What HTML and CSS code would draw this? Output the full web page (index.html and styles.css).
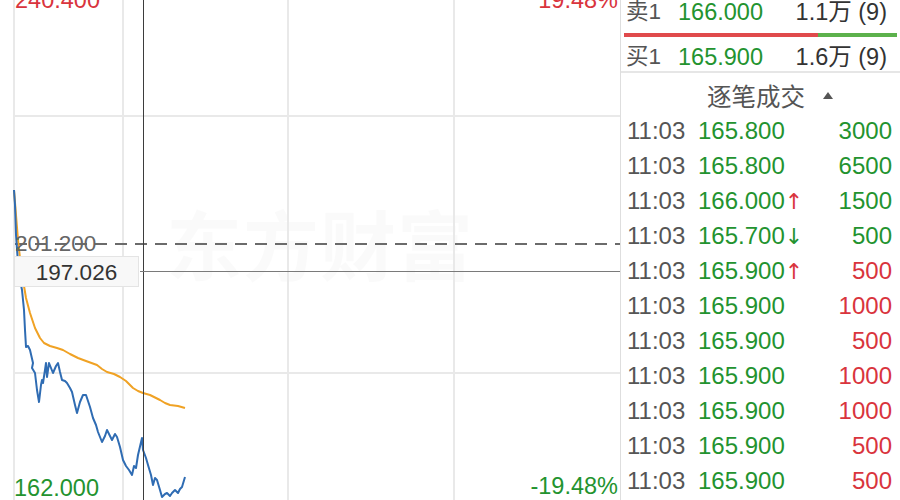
FILE: index.html
```html
<!DOCTYPE html>
<html lang="zh-CN">

<head>
    <meta charset="UTF-8">
    <meta name="viewport" content="width=device-width, initial-scale=1.0">
    <title>分时走势</title>
    <link rel="stylesheet" href="styles.css">
</head>

<body>

    <div class="screen">
        <!-- intraday chart -->
        <div class="chart">
            <div class="watermark">东方财富</div>

            <svg class="plot" viewBox="0 0 620 500" width="620" height="500">
                <!-- grid -->
                <g stroke="#e9e9e9" stroke-width="2">
                    <line x1="14" y1="0" x2="14" y2="500" />
                    <line x1="123" y1="0" x2="123" y2="500" />
                    <line x1="288" y1="0" x2="288" y2="500" />
                    <line x1="454" y1="0" x2="454" y2="500" />
                    <line x1="14" y1="116" x2="620" y2="116" />
                    <line x1="14" y1="373" x2="620" y2="373" />
                </g>

                <!-- previous close -->
                <line x1="15" y1="244" x2="620" y2="244" stroke="#6b6b6b" stroke-width="2" stroke-dasharray="12 8" />

                <!-- average price -->
                <polyline fill="none" stroke="#f0a224" stroke-width="2" stroke-linejoin="round"
                    points="14,190 16,215 18,240 20,258 23,280 26,298 30,313 35,328 40,338 44,343 50,346 57,348 63,350 70,354 78,358 86,361 97,365 102,369 107,372 114,374 120,377 126,381 133,388 138,391 143,393 150,395 160,400 165,403 170,405 178,406 185,408" />

                <!-- price -->
                <polyline fill="none" stroke="#2f6cb3" stroke-width="2" stroke-linejoin="round"
                    points="14,190 15,205 16,235 18,263 20,280 22,290 24,310 25,330 26,347 28,346 30,350 33,363 32,368 35,373 37,390 39,402 41,385 42,380 43,383 45,370 46,363 47,377 49,363 51,368 53,373 56,366 58,363 60,372 62,380 65,381 67,383 70,388 72,392 75,405 77,413 80,402 83,395 86,395 88,401 90,407 93,418 96,425 98,432 100,437 102,442 105,436 107,430 110,436 112,440 115,434 117,437 120,447 123,460 126,466 129,470 132,475 134,466 136,468 138,455 142,438 143,450 146,458 148,465 151,475 153,485 155,478 157,480 160,490 162,497 165,494 167,493 170,496 172,493 175,490 178,493 180,489 182,487 185,477" />

                <!-- crosshair -->
                <line x1="143.5" y1="0" x2="143.5" y2="500" stroke="#3d3d3d" stroke-width="1" />
                <line x1="140" y1="271.5" x2="620" y2="271.5" stroke="#7a7a7a" stroke-width="1" />
            </svg>

            <span class="axis-label top-left up">240.400</span>
            <span class="axis-label top-right up">19.48%</span>
            <span class="axis-label base">201.200</span>
            <span class="cursor-price">197.026</span>
            <span class="axis-label bottom-left down">162.000</span>
            <span class="axis-label bottom-right down">-19.48%</span>
        </div>

        <!-- order book + tick list -->
        <div class="panel">
            <div class="level">
                <span class="level-name">卖1</span>
                <span class="down">166.000</span>
                <span class="level-vol">1.1万 (9)</span>
            </div>
            <div class="depth-bar">
                <div class="depth-sell" style="width: 71%"></div>
                <div class="depth-buy"></div>
            </div>
            <div class="level level-buy">
                <span class="level-name">买1</span>
                <span class="down">165.900</span>
                <span class="level-vol">1.6万 (9)</span>
            </div>

            <div class="ticks-head">
                <span>逐笔成交</span>
                <i class="caret"></i>
            </div>

            <ul class="ticks">
                <li><span class="time">11:03</span><span class="down">165.800</span><span class="vol down">3000</span></li>
                <li><span class="time">11:03</span><span class="down">165.800</span><span class="vol down">6500</span></li>
                <li><span class="time">11:03</span><span class="down">166.000<em class="up">↑</em></span><span class="vol down">1500</span></li>
                <li><span class="time">11:03</span><span class="down">165.700<em class="down">↓</em></span><span class="vol down">500</span></li>
                <li><span class="time">11:03</span><span class="down">165.900<em class="up">↑</em></span><span class="vol up">500</span></li>
                <li><span class="time">11:03</span><span class="down">165.900</span><span class="vol up">1000</span></li>
                <li><span class="time">11:03</span><span class="down">165.900</span><span class="vol up">500</span></li>
                <li><span class="time">11:03</span><span class="down">165.900</span><span class="vol up">1000</span></li>
                <li><span class="time">11:03</span><span class="down">165.900</span><span class="vol up">1000</span></li>
                <li><span class="time">11:03</span><span class="down">165.900</span><span class="vol up">500</span></li>
                <li><span class="time">11:03</span><span class="down">165.900</span><span class="vol up">500</span></li>
            </ul>
        </div>
    </div>

</body>

</html>
```

FILE: styles.css
```css
body {
    margin: 0;
    padding: 0;
    background-color: #fff;
    font-family: 'Liberation Sans', 'Noto Sans CJK SC', sans-serif;
    color: #333;
}

.screen {
    display: flex;
    width: 900px;
    height: 500px;
    overflow: hidden;
}

.up {
    color: #d9343d;
}

.down {
    color: #23932f;
}

/* chart */

.chart {
    position: relative;
    flex: none;
    width: 620px;
    height: 500px;
}

.plot {
    position: absolute;
    top: 0;
    left: 0;
}

.watermark {
    position: absolute;
    top: 192px;
    left: 166px;
    font-family: 'Noto Sans CJK SC', sans-serif;
    font-size: 76px;
    font-weight: 700;
    line-height: 100px;
    color: rgba(0, 0, 0, 0.018);
    letter-spacing: 1px;
}

.axis-label {
    position: absolute;
    font-size: 23.5px;
    line-height: 24px;
}

.top-left {
    top: -12px;
    left: 15px;
}

.top-right {
    top: -12px;
    right: 2px;
}

.bottom-left {
    top: 476px;
    left: 14px;
}

.bottom-right {
    top: 474px;
    right: 2px;
}

.base {
    top: 232px;
    left: 15px;
    font-size: 22.5px;
    color: #666;
}

.cursor-price {
    position: absolute;
    top: 256px;
    left: 14px;
    width: 125px;
    height: 31px;
    box-sizing: border-box;
    border: 1px solid #e4e4e4;
    background-color: #f8f8f8;
    font-size: 22.5px;
    line-height: 31px;
    text-align: center;
    color: #333;
}

/* right panel */

.panel {
    flex: 1;
    border-left: 1px solid #dedede;
    display: flex;
    flex-direction: column;
}

.level {
    display: grid;
    grid-template-columns: 52px auto 1fr;
    height: 24px;
    line-height: 24px;
    padding: 0 13px 0 5px;
    font-size: 23.5px;
}

.level-name {
    font-size: 22.5px;
    color: #555;
}

.level-vol {
    text-align: right;
    color: #333;
}

.level-buy {
    margin-top: 8px;
    padding-bottom: 2px;
    border-bottom: 2px solid #e6e6e6;
}

.depth-bar {
    display: flex;
    height: 4px;
    margin: 9px 3px 0 3px;
}

.depth-sell {
    background-color: #e04a4c;
}

.depth-buy {
    flex: 1;
    background-color: #5cb14c;
}

.ticks-head {
    display: flex;
    align-items: center;
    height: 35px;
    padding: 5px 0 0 86px;
    font-family: 'Noto Sans CJK SC', sans-serif;
    font-size: 24.5px;
    color: #555;
}

.caret {
    margin-left: 18px;
    width: 0;
    height: 0;
    border-left: 5px solid transparent;
    border-right: 5px solid transparent;
    border-bottom: 7px solid #555;
}

.ticks {
    list-style: none;
    margin: 0;
    padding: 0;
}

.ticks li {
    display: grid;
    grid-template-columns: 71px auto 1fr;
    height: 35px;
    line-height: 35px;
    padding: 0 8px 0 6px;
    font-size: 24px;
}

.time {
    color: #555;
}

/* tick direction arrows */
.ticks em {
    font-family: 'DejaVu Sans', sans-serif;
    font-style: normal;
    font-size: 22px;
}

.vol {
    text-align: right;
}
```
